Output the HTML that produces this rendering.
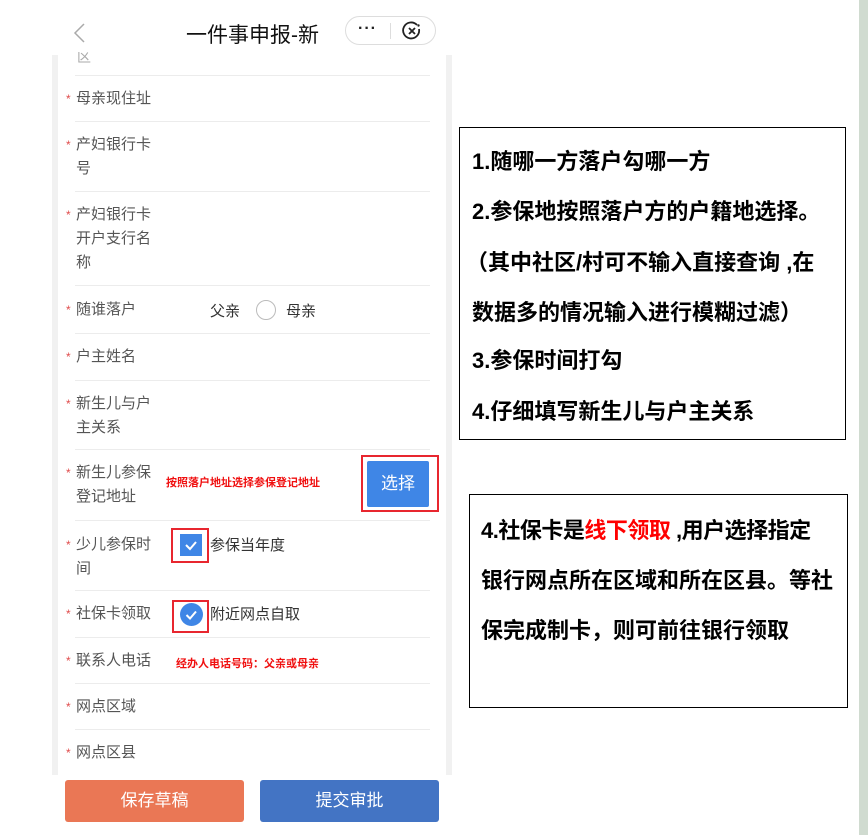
<!DOCTYPE html>
<html><head><meta charset="utf-8"><style>
*{margin:0;padding:0;box-sizing:border-box}
body{width:868px;height:835px;background:#fff;position:relative;overflow:hidden;font-family:"Liberation Sans","Noto Sans CJK SC",sans-serif}
.a{position:absolute;white-space:nowrap}
.strip{position:absolute;left:859px;top:0;width:9px;height:835px;background:#d0dbd0}
.panel{position:absolute;left:52px;top:55px;width:400px;height:720px;background:#f1f1f1}
.card{position:absolute;left:58px;top:55px;width:388px;height:720px;background:#fff}
.hr{position:absolute;left:75px;width:355px;height:1px;background:#ececec}
.lb{position:absolute;left:76px;font-size:15px;color:#555;line-height:24px}
.lb i{position:absolute;left:-10px;top:0;font-style:normal;color:#e04c4c;font-size:12px}
.red{color:#f01010;font-weight:bold;font-size:11px}
.box{position:absolute;border:1.5px solid #000;background:#fff}
.bt{position:absolute;font-weight:bold;font-size:22px;color:#000;white-space:nowrap}
.rb{position:absolute;border:2px solid #e8262f}
</style></head><body>
<div class="strip"></div>
<svg class="a" style="left:72px;top:22px" width="14" height="22"><path d="M12 2L3 11l9 9" fill="none" stroke="#aaa" stroke-width="1.5"/></svg>
<div class="a" style="left:186px;top:19px;font-size:21px;color:#111">一件事申报-新</div>
<div class="a" style="left:345px;top:16px;width:91px;height:29px;border:1px solid #ddd;border-radius:15px"></div>
<div class="a" style="left:358px;top:20px;font-size:16px;color:#222;font-weight:bold;letter-spacing:1px">···</div>
<div class="a" style="left:390px;top:23px;width:1px;height:16px;background:#ddd"></div>
<svg class="a" style="left:402px;top:21px" width="20" height="20" viewBox="0 0 20 20"><path d="M15 4A8 8 0 1 0 17 8" fill="none" stroke="#222" stroke-width="1.8"/><circle cx="16.5" cy="4.5" r="1.2" fill="#222"/><path d="M7 7l6 6M13 7l-6 6" stroke="#222" stroke-width="1.8"/></svg>
<div class="panel"></div><div class="card"></div>
<div class="a" style="top:46px;left:77px;color:#aaa;font-size:14px;height:15px;overflow:hidden;top:52px;line-height:10px">区</div>
<div class="hr" style="top:75px"></div>
<div class="lb" style="top:87px"><i>*</i>母亲现住址</div>
<div class="hr" style="top:121px"></div>
<div class="lb" style="top:133px"><i>*</i>产妇银行卡<br>号</div>
<div class="hr" style="top:191px"></div>
<div class="lb" style="top:203px"><i>*</i>产妇银行卡<br>开户支行名<br>称</div>
<div class="hr" style="top:285px"></div>
<div class="lb" style="top:298px"><i>*</i>随谁落户</div>
<div class="a" style="left:210px;top:300px;font-size:15px;color:#333">父亲</div>
<div class="a" style="left:256px;top:300px;width:20px;height:20px;border:1px solid #bbb;border-radius:50%"></div>
<div class="a" style="left:286px;top:300px;font-size:15px;color:#333">母亲</div>
<div class="hr" style="top:333px"></div>
<div class="lb" style="top:345px"><i>*</i>户主姓名</div>
<div class="hr" style="top:380px"></div>
<div class="lb" style="top:392px"><i>*</i>新生儿与户<br>主关系</div>
<div class="hr" style="top:449px"></div>
<div class="lb" style="top:461px"><i>*</i>新生儿参保<br>登记地址</div>
<div class="a red" style="left:166px;top:474px">按照落户地址选择参保登记地址</div>
<div class="rb" style="left:361px;top:455px;width:78px;height:57px"></div>
<div class="a" style="left:367px;top:461px;width:62px;height:46px;background:#3f86e6;border-radius:2px;color:#fff;font-size:17px;text-align:center;line-height:46px">选择</div>
<div class="hr" style="top:520px"></div>
<div class="lb" style="top:533px"><i>*</i>少儿参保时<br>间</div>
<div class="rb" style="left:171px;top:528px;width:38px;height:35px"></div>
<div class="a" style="left:180px;top:534px;width:22px;height:22px;background:#3f86e6"></div>
<svg class="a" style="left:180px;top:534px" width="22" height="22"><path d="M6 11l4 4 6-7" fill="none" stroke="#fff" stroke-width="2"/></svg>
<div class="a" style="left:210px;top:534px;font-size:15px;color:#333">参保当年度</div>
<div class="hr" style="top:590px"></div>
<div class="lb" style="top:602px"><i>*</i>社保卡领取</div>
<div class="rb" style="left:172px;top:600px;width:37px;height:33px"></div>
<div class="a" style="left:180px;top:603px;width:23px;height:23px;background:#3f86e6;border-radius:50%"></div>
<svg class="a" style="left:180px;top:603px" width="23" height="23"><path d="M6.5 12l3.5 3.5 6-7" fill="none" stroke="#fff" stroke-width="2"/></svg>
<div class="a" style="left:210px;top:603px;font-size:15px;color:#333">附近网点自取</div>
<div class="hr" style="top:637px"></div>
<div class="lb" style="top:649px"><i>*</i>联系人电话</div>
<div class="a red" style="left:176px;top:655px">经办人电话号码：父亲或母亲</div>
<div class="hr" style="top:683px"></div>
<div class="lb" style="top:695px"><i>*</i>网点区域</div>
<div class="hr" style="top:729px"></div>
<div class="lb" style="top:741px"><i>*</i>网点区县</div>
<div class="a" style="left:0;top:775px;width:460px;height:60px;background:#fff"></div>
<div class="a" style="left:65px;top:780px;width:179px;height:42px;background:#ea7755;border-radius:3px;color:#fff;font-size:17px;text-align:center;line-height:42px">保存草稿</div>
<div class="a" style="left:260px;top:780px;width:179px;height:42px;background:#4374c4;border-radius:3px;color:#fff;font-size:17px;text-align:center;line-height:42px">提交审批</div>
<div class="box" style="left:459px;top:127px;width:387px;height:313px"></div>
<div class="bt" style="left:472px;top:144px">1.随哪一方落户勾哪一方</div>
<div class="bt" style="left:472px;top:194px">2.参保地按照落户方的户籍地选择。</div>
<div class="bt" style="left:466px;top:245px">（其中社区/村可不输入直接查询 ,在</div>
<div class="bt" style="left:472px;top:295px">数据多的情况输入进行模糊过滤）</div>
<div class="bt" style="left:472px;top:343px">3.参保时间打勾</div>
<div class="bt" style="left:472px;top:394px">4.仔细填写新生儿与户主关系</div>
<div class="box" style="left:469px;top:494px;width:379px;height:214px"></div>
<div class="bt" style="left:481px;top:513px;letter-spacing:-0.5px">4.社保卡是<span style="color:#f00">线下领取</span> ,用户选择指定</div>
<div class="bt" style="left:481px;top:563px">银行网点所在区域和所在区县。等社</div>
<div class="bt" style="left:481px;top:613px">保完成制卡，则可前往银行领取</div>
</body></html>
